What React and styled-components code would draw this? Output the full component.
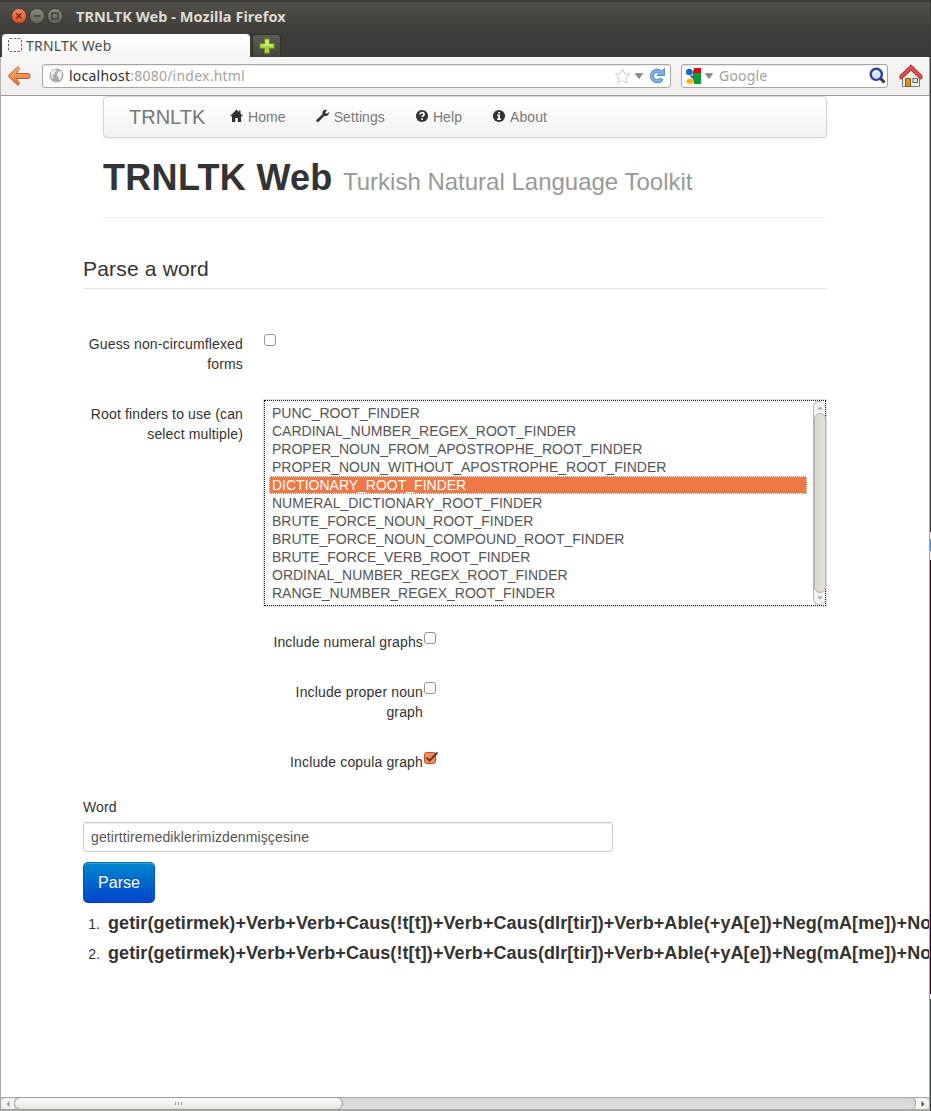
import React from "react";
import styled, { createGlobalStyle } from "styled-components";

const Global = createGlobalStyle`
  * { box-sizing: border-box; }
  body { margin: 0; background: #fff; overflow: hidden; }
  svg { display: block; flex: none; }
`;

const chromeFont = `"Noto Sans", "Open Sans", sans-serif`;
const pageFont = `"Liberation Sans", Arial, sans-serif`;

const Desktop = styled.div`
  width: 931px;
  height: 1111px;
  display: flex;
  overflow: hidden;
  background: linear-gradient(#3c3b37 0 532px, #f2f1f0 532px 539px, #5a8fd0 539px 551px, #f2f1f0 551px 560px, #300a24 560px 994px, #eee 994px 999px, #3c4143 999px);
`;

const Window = styled.div`
  width: 930px;
  height: 1111px;
  display: flex;
  flex-direction: column;
  background: #fff;
`;

const Header = styled.header`
  height: 57px;
  display: flex;
  flex-direction: column;
  background: linear-gradient(#3c3b37 0 2px, #55534c 3px, #504e48 5px, #3e3d39 30px, #3c3b37);
`;

const TitleBar = styled.div`
  height: 34px;
  padding: 0 0 2px 11px;
  display: flex;
  align-items: center;
`;

const WindowButtons = styled.div`
  display: flex;
  gap: 2px;
  margin-right: 13px;
`;

const WindowTitle = styled.span`
  font: bold 14.5px/20px ${chromeFont};
  letter-spacing: 0.06px;
  color: #dfdbd2;
  white-space: nowrap;
`;

const TabStrip = styled.div`
  height: 23px;
  display: flex;
  padding-left: 2px;
  gap: 2px;
`;

const Tab = styled.div`
  width: 248px;
  height: 23px;
  border-radius: 4px 4px 0 0;
  background: linear-gradient(#fff, #f6f5f4);
  display: flex;
  align-items: center;
  padding: 0 0 0 6px;
  gap: 4px;
  font: 14px/22px ${chromeFont};
  letter-spacing: 0.2px;
  color: #4c4c4c;
  svg { margin-bottom: 1px; }
`;

const NewTab = styled.div`
  width: 29px;
  height: 23px;
  border: 1px solid #32312e;
  border-bottom: 0;
  border-radius: 4px 4px 0 0;
  background: linear-gradient(#5d5b55, #46443f);
  display: flex;
  align-items: center;
  justify-content: center;
  padding-bottom: 1px;
`;

const Toolbar = styled.div`
  height: 39px;
  display: flex;
  align-items: center;
  padding: 0 0 1px 7px;
  background: linear-gradient(#f7f6f5, #f0efed);
  border-bottom: 1px solid #9a9996;
  border-left: 1px solid #b5b3b0;
  border-right: 1px solid #9a9996;
`;

const Field = styled.div`
  flex: none;
  height: 24px;
  width: ${(p) => p.$width}px;
  margin-left: ${(p) => p.$left}px;
  border: 1px solid #aaa69f;
  border-radius: 3px;
  background: #fff;
  box-shadow: inset 0 1px 1px rgba(0, 0, 0, 0.08);
  display: flex;
  align-items: center;
  padding: 0 ${(p) => p.$padRight}px 0 ${(p) => p.$padLeft}px;
  font: 14px/22px ${chromeFont};
  color: #a6a19b;
`;

const Address = styled.span`
  flex: 1;
  margin-left: 5px;
  letter-spacing: 0.23px;
`;
const Host = styled.span`
  color: #2e2e2e;
`;
const SearchHint = styled.span`
  flex: 1;
  margin-left: 6px;
  letter-spacing: 0.2px;
`;
const Gap = styled.span`
  width: ${(p) => p.$w}px;
  flex: none;
`;

const Viewport = styled.main`
  height: 1001px;
  border-left: 1px solid #a8a6a3;
  border-right: 1px solid #a8a6a3;
  overflow: hidden;
  font: 14px/20px ${pageFont};
  color: #333;
  padding: 0 0 0 82px;
`;

const Navbar = styled.nav`
  width: 724px;
  height: 42px;
  margin-left: 20px;
  border: 1px solid #d4d4d4;
  border-radius: 4px;
  background: linear-gradient(#fff, #f2f2f2);
  box-shadow: 0 1px 4px rgba(0, 0, 0, 0.065);
  display: flex;
  align-items: center;
  padding: 0 0 0 25px;
  color: #777;
`;

const Brand = styled.span`
  width: 86px;
  font-size: 20px;
  text-shadow: 0 1px 0 #fff;
`;

const NavItem = styled.a`
  padding: 0 15px;
  display: flex;
  align-items: center;
  gap: 4px;
  letter-spacing: 0.08px;
  text-shadow: 0 1px 0 #fff;
  color: #777;
  svg { margin-top: -3px; }
`;

const PageHeader = styled.div`
  width: 724px;
  height: 80px;
  margin: 0 0 30px 20px;
  padding-top: 20px;
  border-bottom: 1px solid #eee;
`;

const Heading = styled.h1`
  margin: 0;
  font-size: 36px;
  line-height: 40px;
  letter-spacing: 0.3px;
  color: #333;
`;
const Sub = styled.small`
  font-size: 24px;
  font-weight: normal;
  letter-spacing: 0;
  color: #999;
`;

const Legend = styled.h2`
  width: 744px;
  height: 41px;
  margin: 0 0 40px;
  padding-top: 1px;
  font-size: 21px;
  font-weight: normal;
  line-height: 40px;
  letter-spacing: 0.18px;
  border-bottom: 1px solid #e5e5e5;
`;

const ControlGroup = styled.div`
  display: flex;
  align-items: flex-start;
  margin: 0 0 ${(p) => p.$after}px ${(p) => (p.$nested ? 180 : 0)}px;
  gap: ${(p) => (p.$nested ? 1 : 21)}px;
`;

const Label = styled.label`
  width: 160px;
  padding-top: 5px;
  text-align: right;
  letter-spacing: 0.15px;
`;

const CheckBox = styled.span`
  width: 12px;
  height: 12px;
  margin-top: 5px;
  border: 1px solid #99938c;
  border-radius: 3px;
  background: linear-gradient(#fff, #fbfbfb);
`;
const CheckedBox = styled.svg`
  margin-top: 4px;
`;

const ListBox = styled.div`
  width: 562px;
  height: 206px;
  margin-top: 1px;
  border: 1px dotted #111;
  box-shadow: 0 0 0 1px #e0e0e0;
  display: flex;
  justify-content: space-between;
`;

const Options = styled.ul`
  list-style: none;
  width: 538px;
  margin: 3px 0 0 4px;
  padding: 0;
`;
const Option = styled.li`
  height: 18px;
  padding-left: 2px;
  line-height: 16px;
  white-space: nowrap;
  border: 1px ${(p) => (p.$selected ? "dotted #fff" : "solid transparent")};
  background: ${(p) => (p.$selected ? "#f07746" : "transparent")};
  color: ${(p) => (p.$selected ? "#fff" : "#555")};
`;

const VScroll = styled.div`
  width: 12px;
  height: 204px;
  border: 1px solid #bab5b0;
  border-right: 0;
  border-radius: 6px;
  background: #f5f4f3;
  display: flex;
  flex-direction: column;
  align-items: center;
  justify-content: space-between;
  padding: 4px 0;
`;
const VThumb = styled.div`
  width: 12px;
  height: 180px;
  border: 1px solid #b5b0ab;
  border-radius: 6px;
  background: linear-gradient(90deg, #d9d6d3, #e5e3e1);
`;

const WordLabel = styled.label`
  display: block;
  margin-bottom: 5px;
  letter-spacing: 0.15px;
`;
const WordInput = styled.input`
  display: block;
  width: 530px;
  height: 30px;
  padding: 4px 7px;
  border: 1px solid #ccc;
  border-radius: 3px;
  box-shadow: inset 0 1px 1px rgba(0, 0, 0, 0.075);
  font: 14px/20px ${pageFont};
  letter-spacing: 0.12px;
  color: #555;
  outline: 0;
`;
const ParseButton = styled.button`
  display: block;
  width: 72px;
  height: 41px;
  margin: 10px 0 5px;
  padding: 0;
  border: 1px solid #0059b3;
  border-color: #0873bb #0055bb #003fae;
  border-radius: 5px;
  background: linear-gradient(#0088cc, #0044cc);
  box-shadow: inset 0 1px 0 rgba(255, 255, 255, 0.2), 0 1px 2px rgba(0, 0, 0, 0.05);
  color: #fff;
  font: 16px/20px ${pageFont};
  text-shadow: 0 -1px 0 rgba(0, 0, 0, 0.25);
`;

const Results = styled.ol`
  margin: 0;
  padding: 0;
  list-style: none;
`;
const Result = styled.li`
  display: flex;
  height: 30px;
  line-height: 30px;
  white-space: nowrap;
`;
const Index = styled.span`
  width: 25px;
  padding: 1px 8px 0 0;
  text-align: right;
  flex: none;
`;
const Analysis = styled.b`
  font-size: 18px;
  letter-spacing: 0.09px;
`;

const HScroll = styled.footer`
  height: 14px;
  border: 1px solid #aaa6a2;
  border-bottom: 2px solid #aaa6a2;
  background: linear-gradient(#d6d3d0, #e0dedc);
  display: flex;
  align-items: stretch;
`;
const ArrowEnd = styled.div`
  width: 13px;
  display: flex;
  align-items: center;
  justify-content: center;
  background: #f4f3f2;
  border-radius: ${(p) => (p.$end ? "0 6px 6px 0" : "6px 0 0 6px")};
`;
const HThumb = styled.div`
  width: 329px;
  margin: -1px 0;
  border: 1px solid #9f9a95;
  border-radius: 7px;
  background: linear-gradient(#fdfdfd, #e6e4e2);
  display: flex;
  align-items: center;
  justify-content: center;
  gap: 2px;
`;
const Grip = styled.i`
  width: 1px;
  height: 3px;
  background: #999;
`;
const Track = styled.div`
  flex: 1;
  border-right: 1px solid #aaa6a2;
  border-radius: 0 6px 6px 0;
`;

function WindowButton({ kind }) {
  const close = kind === "close";
  return (
    <svg width="16" height="16" viewBox="0 0 16 16">
      <defs>
        <linearGradient id={`g-${kind}`} x2="0" y2="1">
          <stop stopColor={close ? "#f58a66" : "#8b8880"} />
          <stop offset="1" stopColor={close ? "#df4a1c" : "#66645d"} />
        </linearGradient>
      </defs>
      <circle cx="8" cy="8" r="7.5" fill={`url(#g-${kind})`} stroke="#34332f" strokeWidth=".7" />
      <g stroke={close ? "#4b1f10" : "#34332f"} strokeWidth="1.2" fill="none">
        {close && <path d="M5.3 5.3l5 5M10.3 5.3l-5 5" />}
        {kind === "min" && <path d="M4.5 8h7" />}
        {kind === "max" && <rect x="5" y="5" width="6" height="6" />}
      </g>
    </svg>
  );
}

const Caret = () => (
  <svg width="8" height="6" viewBox="0 0 8 6"><path d="M.3.6h7.4L4 5.6z" fill="#8b8b88" stroke="#6f6f6d" strokeWidth=".6" /></svg>
);

const glyphs = {
  Home: <path d="M6.500 .5L0 7.200h2v5.800h3.300V9h2.500v4h3.300V7.200h2L10.500 4.500V1.500H8.900v1.400z" />,
  Settings: <path d="M12.9 3.1L10.6 4.9 9.2 3.6 11 1.1C9.3.4 7.4 1.1 6.6 2.7c-.4.9-.4 1.7-.1 2.5L.9 10.4c-.8.8-.8 1.6-.2 2.2s1.500.7 2.200-.1l5.300-5.600c1.200.4 2.600.1 3.600-.7 1-.9 1.400-2.100 1.100-3.100z" />,
  Help: (
    <>
      <circle cx="7" cy="7" r="6.1" />
      <path d="M4.900 5.600c0-2.700 4.400-2.500 4.200-.1-.1 1.200-1.900 1.300-1.900 2.500M7.100 9.200v1.700" fill="none" stroke="#fff" strokeWidth="1.700" />
    </>
  ),
  About: (
    <>
      <circle cx="7" cy="7" r="6.1" />
      <path d="M6.100 2.900H8v1.700H6.100zM5.100 5.600H8v4h1v1.300H5.100V9.600h1V6.900h-1z" fill="#fff" />
    </>
  ),
};

const rootFinders = [
  "PUNC_ROOT_FINDER",
  "CARDINAL_NUMBER_REGEX_ROOT_FINDER",
  "PROPER_NOUN_FROM_APOSTROPHE_ROOT_FINDER",
  "PROPER_NOUN_WITHOUT_APOSTROPHE_ROOT_FINDER",
  "DICTIONARY_ROOT_FINDER",
  "NUMERAL_DICTIONARY_ROOT_FINDER",
  "BRUTE_FORCE_NOUN_ROOT_FINDER",
  "BRUTE_FORCE_NOUN_COMPOUND_ROOT_FINDER",
  "BRUTE_FORCE_VERB_ROOT_FINDER",
  "ORDINAL_NUMBER_REGEX_ROOT_FINDER",
  "RANGE_NUMBER_REGEX_ROOT_FINDER",
];

const analysis = "getir(getirmek)+Verb+Verb+Caus(!t[t])+Verb+Caus(dIr[tir])+Verb+Able(+yA[e])+Neg(mA[me])+Noun";

export default function App() {
  return (
    <Desktop>
      <Global />
      <Window>
        <Header>
          <TitleBar>
            <WindowButtons>
              <WindowButton kind="close" />
              <WindowButton kind="min" />
              <WindowButton kind="max" />
            </WindowButtons>
            <WindowTitle>TRNLTK Web - Mozilla Firefox</WindowTitle>
          </TitleBar>
          <TabStrip>
            <Tab>
              <svg width="14" height="14" viewBox="0 0 14 14">
                <rect x=".5" y=".5" width="13" height="13" rx="1.500" fill="none" stroke="#666" strokeDasharray="2.500 1.500" />
              </svg>
              TRNLTK Web
            </Tab>
            <NewTab>
              <svg width="16" height="16" viewBox="0 0 16 16">
                <path d="M5.500.8h5v4.700h4.700v5h-4.700v4.700h-5v-4.700H.8v-5h4.700z" fill="#a9cf3d" stroke="#5f8f1f" />
                <path d="M6.500 1.800h3v4.700h4.700v1.500H1.800V6.500h4.700z" fill="#d2e67c" />
              </svg>
            </NewTab>
          </TabStrip>
        </Header>

        <Toolbar>
          <svg width="23" height="20" viewBox="0 0 23 20">
            <defs><linearGradient id="back" x2="0" y2="1"><stop stopColor="#fbb878" /><stop offset="1" stopColor="#e5702a" /></linearGradient></defs>
            <path d="M9.200 1.200c1.300-.8 2.800.9 1.800 2.200L8 7.500h12.500c2 0 2 5 0 5H8l3 4.100c1 1.300-.5 3-1.800 2.200L.9 10.700v-1.400z" fill="url(#back)" stroke="#c5552c" />
          </svg>
          <Field $width={629} $left={11} $padLeft={6} $padRight={5}>
            <svg width="15" height="15" viewBox="0 0 15 15">
              <circle cx="7.500" cy="7.500" r="7" fill="#a9a9a9" />
              <path d="M2 4l2-2 3-.5 1 1.500-2 1-.5 2L3 7.500 4.500 9 4 11 2 9zM9 3.500l3-.5 1.500 3-1 .5L13 9l-2 3-1.500-.5.3-2.500-2-1.500L8.500 5z" fill="#eee" />
            </svg>
            <Address><Host>localhost</Host>:8080/index.html</Address>
            <svg width="17" height="16" viewBox="0 0 17 16">
              <path d="M8.500 1l2.200 4.800 5.300.6-3.900 3.600 1.100 5.200-4.700-2.600-4.700 2.600L4.900 10 1 6.400l5.300-.6z" fill="#fff" stroke="#c9c9c9" />
            </svg>
            <Gap $w={4} />
            <Caret />
            <Gap $w={6} />
            <svg width="16" height="16" viewBox="0 0 16 16">
              <path d="M12.800 10.300A5.200 5.200 0 1 1 11.500 4" fill="none" stroke="#3f7fbd" strokeWidth="4" />
              <path d="M15.500.3v7.200H8z" fill="#79aedd" stroke="#3f7fbd" strokeWidth=".8" />
              <path d="M12.800 10.300A5.200 5.200 0 1 1 12 4.500" fill="none" stroke="#80b3e0" strokeWidth="2.600" />
            </svg>
          </Field>
          <Field $width={207} $left={10} $padLeft={3} $padRight={1}>
            <svg width="16" height="16" viewBox="0 0 16 16">
              <path d="M8 0h8v5H8z" fill="#e8000d" />
              <path d="M7 5h9v11H9z" fill="#0a9a3c" />
              <path d="M0 0h9L7 8l2 8H0z" fill="#fff" />
              <circle cx="4.300" cy="4" r="3.300" fill="#1665c8" />
              <path d="M5 7l4 1.500L7 11z" fill="#1665c8" />
              <ellipse cx="5" cy="13.300" rx="3.600" ry="2.400" fill="#f9b10b" />
              <path d="M8 5.500h4v3H8z" fill="#0a9a3c" />
            </svg>
            <Gap $w={4} />
            <Caret />
            <SearchHint>Google</SearchHint>
            <svg width="17" height="17" viewBox="0 0 17 17">
              <path d="M11 11l4.500 4.500" stroke="#333" strokeWidth="3" />
              <circle cx="7.300" cy="7.300" r="5.600" fill="#d5e4f7" stroke="#2f4191" strokeWidth="2.400" />
              <path d="M4.500 6.500A3 3 0 0 1 8 4.300" fill="none" stroke="#fff" strokeWidth="1.300" />
            </svg>
          </Field>
          <Gap $w={11} />
          <svg width="24" height="24" viewBox="0 0 24 24">
            <path d="M3.500 11L12 4l8.500 7v11.500h-17z" fill="#eceae5" stroke="#777" />
            <path d="M6.500 14.500h5v8h-5z" fill="#d38c2c" stroke="#93580f" />
            <rect x="14" y="14.500" width="4.500" height="4" fill="#dce8ee" stroke="#666" />
            <path d="M12 .8L1 11.500v3.200l1.500.3L12 6.200l9.500 8.800 1.500-.3v-3.200z" fill="#d64d52" stroke="#a52a30" />
          </svg>
        </Toolbar>

        <Viewport>
          <Navbar>
            <Brand>TRNLTK</Brand>
            {Object.entries(glyphs).map(([name, glyph]) => (
              <NavItem key={name}>
                <svg width="14" height="14" viewBox="0 0 14 14" fill="#333">{glyph}</svg>
                {name}
              </NavItem>
            ))}
          </Navbar>
          <PageHeader>
            <Heading>TRNLTK Web <Sub>Turkish Natural Language Toolkit</Sub></Heading>
          </PageHeader>
          <Legend>Parse a word</Legend>

          <ControlGroup $after={25}>
            <Label>Guess non-circumflexed forms</Label>
            <CheckBox />
          </ControlGroup>
          <ControlGroup $after={21}>
            <Label>Root finders to use (can select multiple)</Label>
            <ListBox>
              <Options>
                {rootFinders.map((name) => (
                  <Option key={name} $selected={name === "DICTIONARY_ROOT_FINDER"}>{name}</Option>
                ))}
              </Options>
              <VScroll>
                <svg width="6" height="4" viewBox="0 0 6 4"><path d="M0 3.500h6L3 .5z" fill="#aaa" /></svg>
                <VThumb />
                <svg width="6" height="4" viewBox="0 0 6 4"><path d="M0 .5h6L3 3.500z" fill="#aaa" /></svg>
              </VScroll>
            </ListBox>
          </ControlGroup>
          <ControlGroup $nested $after={25}>
            <Label>Include numeral graphs</Label>
            <CheckBox />
          </ControlGroup>
          <ControlGroup $nested $after={25}>
            <Label>Include proper noun graph</Label>
            <CheckBox />
          </ControlGroup>
          <ControlGroup $nested $after={25}>
            <Label>Include copula graph</Label>
            <CheckedBox width="15" height="14" viewBox="0 0 15 14">
              <rect x=".5" y="1.500" width="11" height="11" rx="2" fill="#f58a5c" stroke="#c04e26" />
              <path d="M2.500 6.500l3 3.200L13.500 1.500" fill="none" stroke="#5d3526" strokeWidth="1.800" />
            </CheckedBox>
          </ControlGroup>

          <WordLabel>Word</WordLabel>
          <WordInput defaultValue="getirttiremediklerimizdenmişçesine" />
          <ParseButton>Parse</ParseButton>
          <Results>
            {[1, 2].map((n) => (
              <Result key={n}>
                <Index>{n}.</Index>
                <Analysis>{analysis}</Analysis>
              </Result>
            ))}
          </Results>
        </Viewport>

        <HScroll>
          <ArrowEnd>
            <svg width="4" height="6" viewBox="0 0 4 6"><path d="M3.500 0v6L.5 3z" fill="#999" /></svg>
          </ArrowEnd>
          <HThumb><Grip /><Grip /><Grip /></HThumb>
          <Track />
          <ArrowEnd $end>
            <svg width="4" height="6" viewBox="0 0 4 6"><path d="M.5 0v6l3-3z" fill="#555" /></svg>
          </ArrowEnd>
        </HScroll>
      </Window>
    </Desktop>
  );
}
